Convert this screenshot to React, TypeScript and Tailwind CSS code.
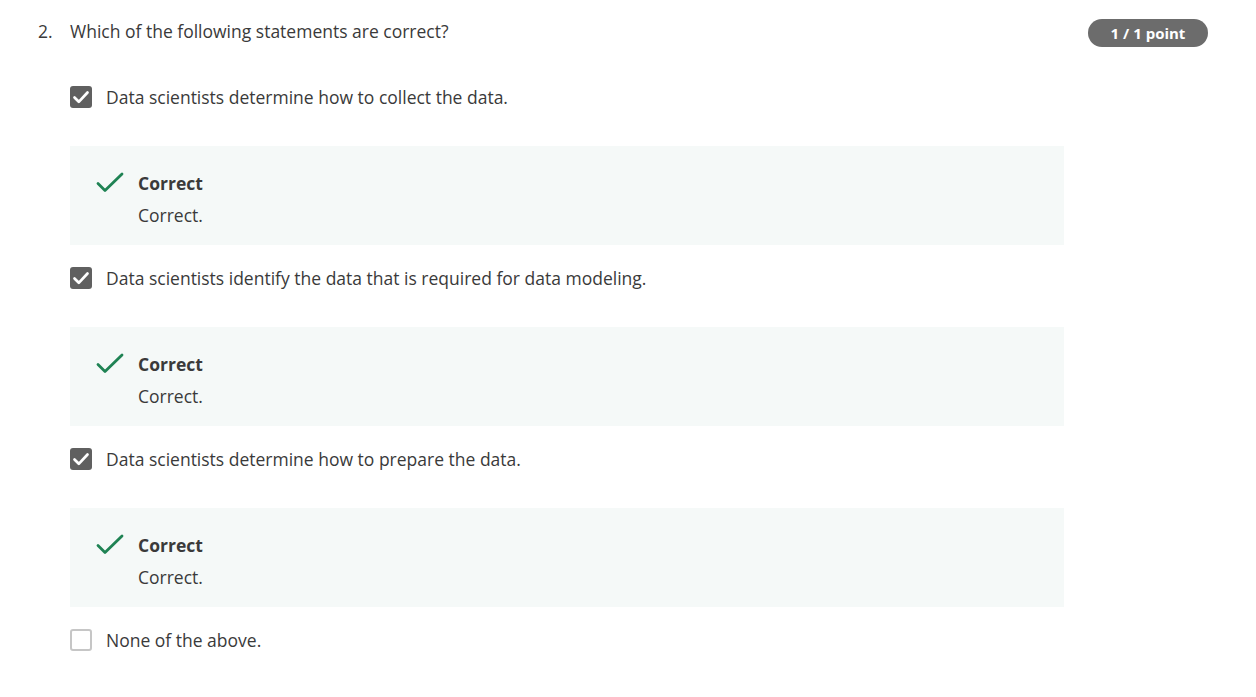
const font = { fontFamily: '"Open Sans", "Liberation Sans", sans-serif' };

type Option = { text: string; checked: boolean; feedback?: string };

const options: Option[] = [
  { text: 'Data scientists determine how to collect the data.', checked: true, feedback: 'Correct.' },
  { text: 'Data scientists identify the data that is required for data modeling.', checked: true, feedback: 'Correct.' },
  { text: 'Data scientists determine how to prepare the data.', checked: true, feedback: 'Correct.' },
  { text: 'None of the above.', checked: false },
];

function Checkbox({ checked }: { checked: boolean }) {
  if (!checked) {
    return <div className="w-[22px] h-[22px] shrink-0 rounded-[3px] border-2 border-[#c6c6c6] bg-white" />;
  }
  return (
    <svg width="22" height="22" viewBox="0 0 22 22" className="shrink-0">
      <rect x="0" y="0" width="22" height="22" rx="3" fill="#606060" />
      <polyline points="4.5,11.5 8.8,15.8 17.5,6.5" fill="none" stroke="#fff" strokeWidth="2.7" strokeLinecap="round" strokeLinejoin="round" />
    </svg>
  );
}

function GreenCheck() {
  return (
    <svg width="28" height="22" viewBox="0 0 28 22" className="shrink-0 mt-[1px]">
      <polyline points="2,11.5 9,18.5 26,2" fill="none" stroke="#1f8354" strokeWidth="2.8" strokeLinecap="round" strokeLinejoin="round" />
    </svg>
  );
}

export default function App() {
  return (
    <div className="min-h-screen bg-white text-[#3a3a3a] px-[38px] pt-[19px]" style={font}>
      <div className="flex items-start">
        <span className="w-8 shrink-0 text-[17.5px] leading-6">2.</span>
        <span className="flex-1 text-[17.5px] leading-6">Which of the following statements are correct?</span>
        <span className="h-7 w-[120px] mr-[10px] rounded-full bg-[#6c6c6c] text-white text-[15px] font-bold flex items-center justify-center">
          1 / 1 point
        </span>
      </div>

      <div className="ml-8 mt-[38px] w-[994px]">
        {options.map((o, i) => (
          <div key={i} className={i === 0 ? '' : 'mt-[21px]'}>
            <div className="flex items-center gap-[14px] h-6">
              <Checkbox checked={o.checked} />
              <span className="text-[17.5px] leading-6">{o.text}</span>
            </div>
            {o.feedback && (
              <div className="mt-[37px] h-[99px] bg-[#f5f9f8] pl-[26px] pt-[25px] flex gap-[14px]">
                <GreenCheck />
                <div className="leading-6">
                  <div className="text-[17.5px] font-bold">Correct</div>
                  <div className="text-[17.5px] mt-2">{o.feedback}</div>
                </div>
              </div>
            )}
          </div>
        ))}
      </div>
    </div>
  );
}
